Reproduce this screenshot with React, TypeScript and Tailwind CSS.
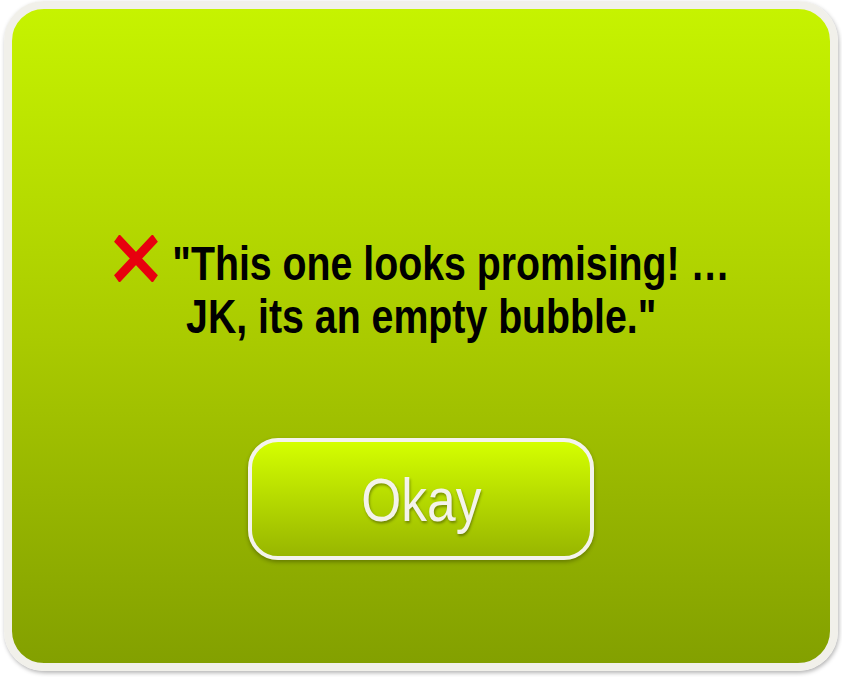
export default function App() {
  return (
    <div className="w-[842px] h-[677px] bg-white pl-[4px] pt-[1px]">
      <div className="w-[834px] h-[670px] rounded-[40px] border-[8px] border-[#f1f0ea] shadow-[1px_2px_4px_rgba(0,0,0,0.3)] bg-gradient-to-b from-[#c6f300] via-[#aacb00] to-[#83a000] flex flex-col items-center">
        <div
          className="mt-[228px] text-center text-black font-bold text-[48px] leading-[53px] scale-x-[0.818]"
          style={{ fontFamily: '"Liberation Sans", Arial, sans-serif' }}
        >
          <div className="flex items-center justify-center whitespace-nowrap">
            <svg width="57" height="47" viewBox="0 0 57 47" className="mr-[16px] -mt-[10px]">
              <path d="M5 3 L52 44 M52 3 L5 44" stroke="#e8000e" strokeWidth="10" />
            </svg>
            <span>"This one looks promising! …</span>
          </div>
          <div className="whitespace-nowrap">JK, its an empty bubble."</div>
        </div>
        <button
          className="mt-[95px] w-[346px] h-[122px] shrink-0 rounded-[30px] border-[4px] border-[#f4f3ec] bg-gradient-to-b from-[#d4ff00] to-[#98b600] shadow-[0_2px_4px_rgba(0,0,0,0.3)] flex items-center justify-center"
          style={{ fontFamily: '"Liberation Sans", Arial, sans-serif' }}
        >
          <span className="text-[#f4f3ea] text-[62px] scale-x-[0.83] [text-shadow:1px_2px_3px_rgba(0,0,0,0.35)]">Okay</span>
        </button>
      </div>
    </div>
  );
}
